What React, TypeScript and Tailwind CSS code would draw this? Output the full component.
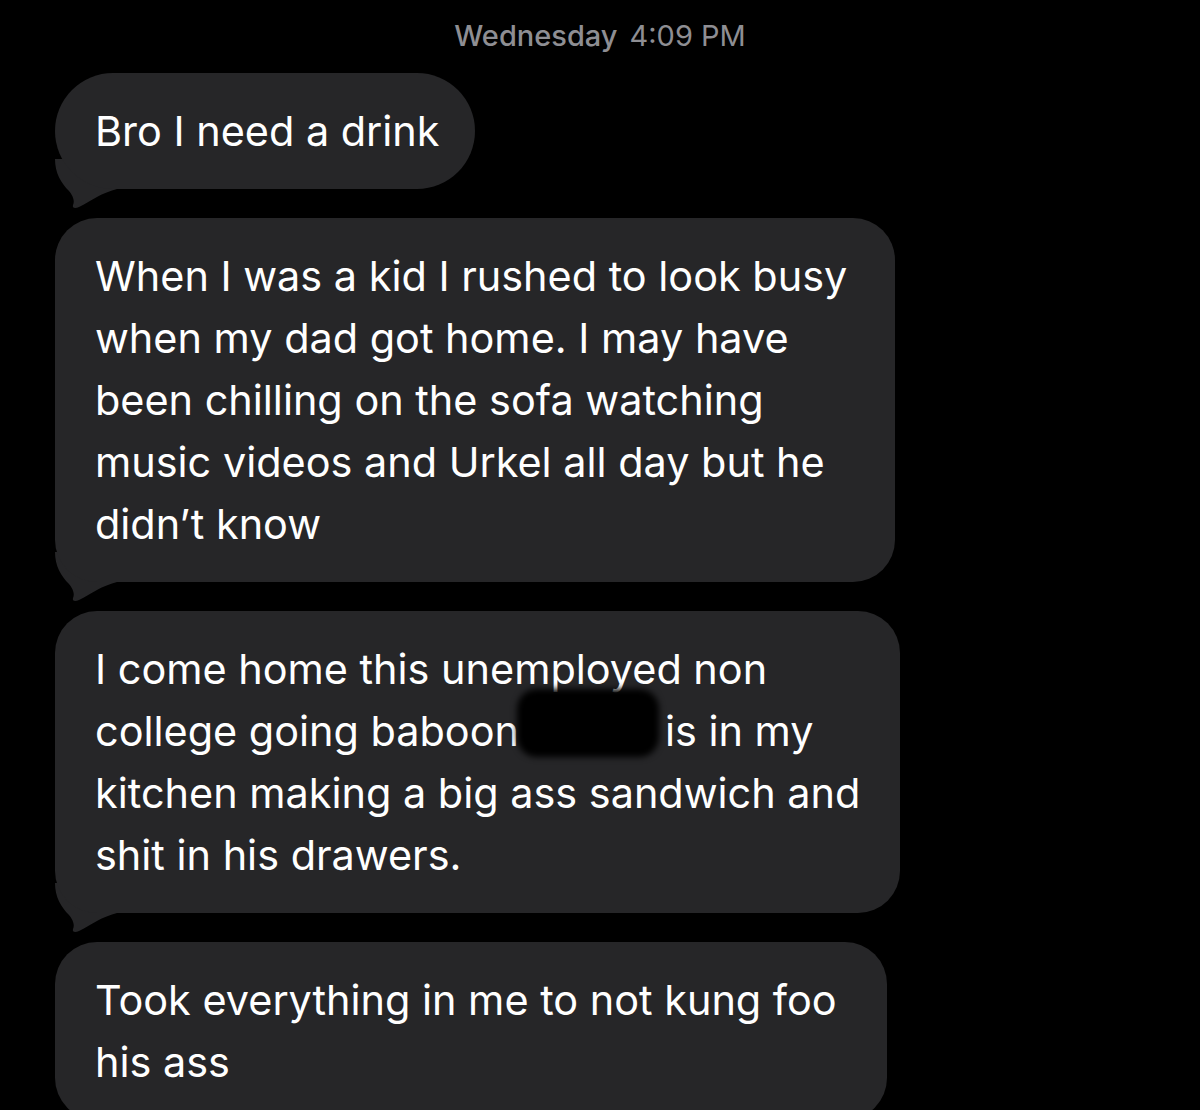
import React from 'react';

type Bubble = {
  lines: React.ReactNode[];
  width: string;
  rounded: string;
  redact?: boolean;
};

const Tail = () => (
  <svg
    className="absolute left-[-4px] bottom-[-20px]"
    width="70"
    height="50"
    viewBox="0 0 70 50"
    fill="#262628"
  >
    <path d="M4 0 C4 14 10 24 18 32 C22 37 24 42 22 46 C21 49 24 50 28 48 C40 42 50 34 66 30 L66 0 Z" />
  </svg>
);

const MessageBubble: React.FC<{ bubble: Bubble; tail?: boolean }> = ({ bubble, tail = true }) => (
  <div className={`relative ${bubble.width}`}>
    {tail && <Tail />}
    <div
      className={`relative bg-[#262628] ${bubble.rounded} pl-[40px] pr-[30px] py-[27px] text-white text-[41.4px] leading-[62px] whitespace-nowrap`}
    >
      {bubble.lines.map((line, i) => (
        <div key={i}>{line}</div>
      ))}
      {bubble.redact && (
        <div className="absolute left-[462px] top-[78px] w-[142px] h-[68px] bg-black rounded-[20px] blur-[3px]" />
      )}
    </div>
  </div>
);

const bubbles: Bubble[] = [
  { lines: ['Bro I need a drink'], width: 'w-[420px]', rounded: 'rounded-[58px]' },
  {
    lines: [
      'When I was a kid I rushed to look busy',
      'when my dad got home. I may have',
      'been chilling on the sofa watching',
      'music videos and Urkel all day but he',
      'didn\u2019t know',
    ],
    width: 'w-[840px]',
    rounded: 'rounded-[42px]',
  },
  {
    lines: [
      'I come home this unemployed non',
      <>
        college going baboon<span className="inline-block w-[146px]" />is in my
      </>,
      'kitchen making a big ass sandwich and',
      'shit in his drawers.',
    ],
    width: 'w-[845px]',
    rounded: 'rounded-[42px]',
    redact: true,
  },
  {
    lines: ['Took everything in me to not kung foo', 'his ass'],
    width: 'w-[832px]',
    rounded: 'rounded-[42px]',
  },
];

export default function App() {
  return (
    <div
      className="w-[1200px] h-[1110px] bg-black overflow-hidden"
      style={{ fontFamily: 'Inter, "Liberation Sans", sans-serif' }}
    >
      {/* Horodatage */}
      <div className="h-[73px] flex items-center justify-center text-[#8e8e93] text-[29px] pb-[2px]">
        <span className="font-medium mr-[12px]">Wednesday</span>
        <span>4:09 PM</span>
      </div>

      <div className="flex flex-col gap-[29px] pl-[55px]">
        {bubbles.map((b, i) => (
          <MessageBubble key={i} bubble={b} tail={i < bubbles.length - 1} />
        ))}
      </div>
    </div>
  );
}
